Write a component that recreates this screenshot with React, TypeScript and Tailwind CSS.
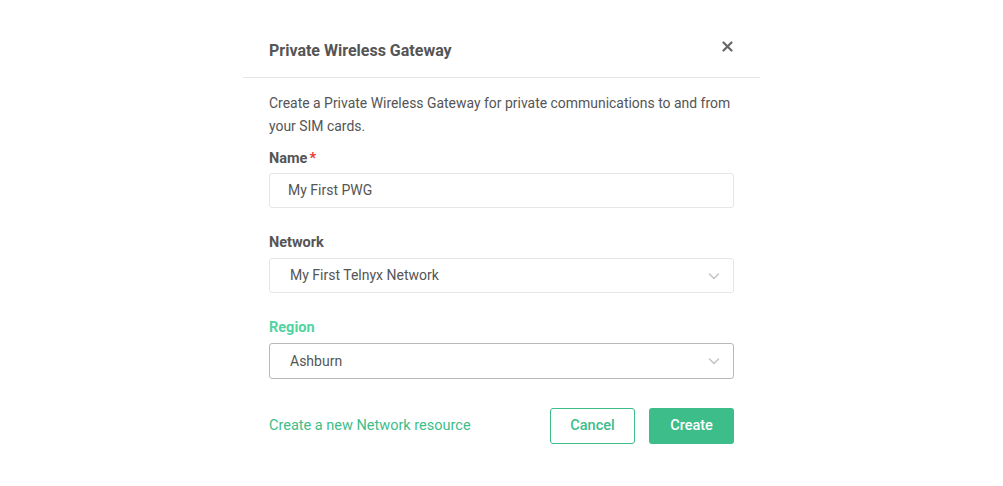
import React from "react";

const Chevron = () => (
  <svg width="14" height="14" viewBox="0 0 14 14" fill="none" className="shrink-0">
    <path d="M2.5 5l4.5 4.5L11.5 5" stroke="#c4c4c4" strokeWidth="1.5" strokeLinecap="round" strokeLinejoin="round" />
  </svg>
);

export default function App() {
  return (
    <div className="w-[1003px] h-[486px] bg-white flex justify-center" style={{ fontFamily: "Roboto, 'Liberation Sans', sans-serif" }}>
      <div className="w-[517px] pt-[39px]">
        <div className="flex items-center justify-between px-[26px] h-[23px] pb-0">
          <h1 className="text-[16px] font-bold text-[#555555] leading-[23px]">Private Wireless Gateway</h1>
          <svg width="11" height="11" viewBox="0 0 11 11" className="mr-[1px] -mt-[8px]">
            <path d="M1.5 1.5l8 8M9.5 1.5l-8 8" stroke="#666" strokeWidth="2.2" strokeLinecap="round" />
          </svg>
        </div>
        <div className="mt-[15px] h-px bg-[#e6e6e6]" />
        <div className="px-[26px] pt-[14px]">
          <p className="text-[13.95px] leading-[23px] text-[#555555] mr-[-4px]">
            Create a Private Wireless Gateway for private communications to and from your SIM cards.
          </p>
          <div className="mt-[11px] text-[14.5px] font-bold text-[#555555] leading-[20px]">
            Name<span className="text-[#e53935] ml-[2px]">*</span>
          </div>
          <div className="mt-[4px] h-[35px] border border-[#e6e6e6] rounded-[3px] flex items-center pl-[18px] text-[14px] text-[#555555]">
            My First PWG
          </div>
          <div className="mt-[25px] text-[14.5px] font-bold text-[#555555] leading-[20px]">Network</div>
          <div className="mt-[5px] h-[35px] border border-[#e6e6e6] rounded-[3px] flex items-center justify-between pl-[20px] pr-[12px] text-[14px] text-[#555555]">
            <span>My First Telnyx Network</span>
            <Chevron />
          </div>
          <div className="mt-[25px] text-[14.5px] font-bold text-[#52d3a2] leading-[20px]">Region</div>
          <div className="mt-[5px] h-[36px] border border-[#b8b8b8] rounded-[3px] flex items-center justify-between pl-[20px] pr-[12px] text-[14px] text-[#555555]">
            <span>Ashburn</span>
            <Chevron />
          </div>
          <div className="mt-[29px] flex items-center justify-between">
            <span className="text-[14.5px] text-[#3dbd8a]">Create a new Network resource</span>
            <div className="flex gap-[14px]">
              <button className="w-[85px] h-[36px] border border-[#3dbd8a] rounded-[3px] text-[14.5px] font-medium text-[#3dbd8a] bg-white">Cancel</button>
              <button className="w-[85px] h-[36px] rounded-[3px] text-[14.5px] font-medium text-white bg-[#3dbd8a]">Create</button>
            </div>
          </div>
        </div>
      </div>
    </div>
  );
}
